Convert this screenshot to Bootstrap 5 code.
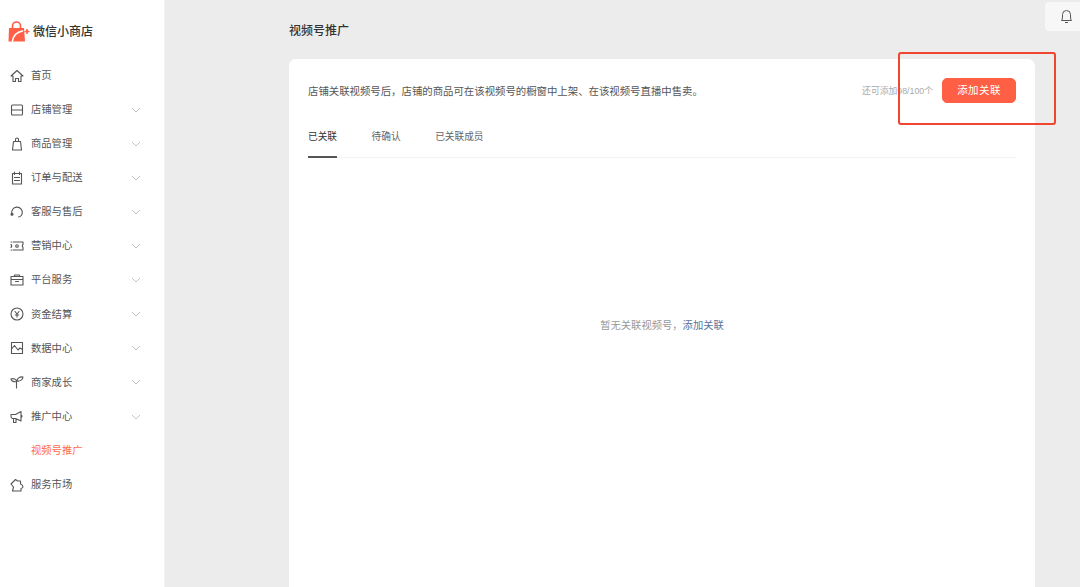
<!DOCTYPE html>
<html lang="zh">
<head>
<meta charset="utf-8">
<title>视频号推广</title>
<link href="https://cdn.jsdelivr.net/npm/bootstrap@5.3.0/dist/css/bootstrap.min.css" rel="stylesheet">
<style>
html,body{height:587px;overflow:hidden}
body{background:#ececec;font-family:"Liberation Sans","Noto Sans CJK SC",sans-serif;color:#333;position:relative}
.shell{height:587px}
.side{width:165px;background:#fff;flex:none;padding-top:20px;border-right:1px solid #f1f1f1}
.brand{height:24px;padding-left:8px;gap:3px;font-size:12px;color:#333;font-weight:500;margin-bottom:14.600px}
.mitem{height:34.100px;padding-left:10px;padding-right:23px;font-size:10.300px;color:#555;gap:7px}
.mitem svg.ic{width:14px;height:14px;flex:none;fill:none;stroke:#555;stroke-width:1.100;stroke-linecap:round;stroke-linejoin:round}
.mitem svg.chev{width:10px;height:6px;margin-left:auto;fill:none;stroke:#c4c4c4;stroke-width:1}
.mitem.sub{padding-left:31px;color:#ff6a50}
.work{flex:1;min-width:0;padding-left:124px;padding-right:45px}
.page-h{height:59px;padding-top:22px;font-size:12px;line-height:18px;color:#333;font-weight:500}
.panel{background:#fff;border-radius:7px 7px 0 0;height:528px;padding:19px 19px 0 19px}
.topline{height:25px}
.desc{font-size:10.400px;color:#555;margin-top:2px}
.quota{font-size:8.800px;color:#aaa;margin-right:9px;margin-top:2px}
.addbtn{--bs-btn-bg:#ff5f45;--bs-btn-border-color:#ff5f45;--bs-btn-color:#fff;--bs-btn-hover-bg:#ff5f45;--bs-btn-hover-border-color:#ff5f45;--bs-btn-hover-color:#fff;width:74px;height:25px;padding:0;font-size:10.500px;letter-spacing:.4px;line-height:23px;border-radius:5px}
.tabrow{margin-top:14px;height:41px;border-bottom:1px solid #f3f3f3;gap:34.500px;font-size:9.700px;color:#666}
.tabitem{height:41px;padding-top:13px;line-height:14px}
.tabitem.on{color:#333;border-bottom:2px solid #555}
.empty{height:336px;font-size:10.300px;color:#999}
.empty a{color:#56729c;text-decoration:none}
.bellbox{position:absolute;left:1045px;top:2px;width:35px;height:29px;background:#f7f7f7;border-radius:4px 0 0 4px;padding-left:8px}
.bellbox svg{width:13px;height:15px;fill:none;stroke:#555;stroke-width:1}
.markbox{position:absolute;left:898px;top:52px;width:158px;height:73px;border:2px solid #f0452f;border-radius:3px;pointer-events:none}
</style>
</head>
<body>
<div class="d-flex shell">
  <aside class="side">
    <div class="brand d-flex align-items-center">
      <svg width="22" height="22" viewBox="0 0 22 22"><path d="M4.500 7 V5 a4 4 0 0 1 8 0 V7" fill="none" stroke="#ff5f45" stroke-width="1.600"/><path d="M1 7 H16 L17 20.500 H0.500 Z" fill="#ff5f45"/><path d="M4.500 20 C5.500 14 9 11 14.500 10" fill="none" stroke="#fff" stroke-width="1.600" stroke-linecap="round"/><path d="M19 8 V13 M16.500 10.500 H21.500" stroke="#ff5f45" stroke-width="1.600"/></svg>
      <span>微信小商店</span>
    </div>
    <nav>
      <div class="mitem d-flex align-items-center"><svg class="ic" viewBox="0 0 14 14"><path d="M1 7 7 1.500 13 7 H11 V12.500 H8.500 V9.500 H5.500 V12.500 H3 V7 Z"/></svg><span>首页</span></div>
      <div class="mitem d-flex align-items-center"><svg class="ic" viewBox="0 0 14 14"><path d="M2.500 2 H11.500 Q12.500 2 12.500 3 V11 Q12.500 12 11.500 12 H2.500 Q1.500 12 1.500 11 V3 Q1.500 2 2.500 2 Z M1.500 7 H12.500"/></svg><span>店铺管理</span><svg class="chev" viewBox="0 0 10 6"><path d="M1 1 5 5 9 1"/></svg></div>
      <div class="mitem d-flex align-items-center"><svg class="ic" viewBox="0 0 14 14"><path d="M3.500 4.500 H10.500 L11.500 13 H2.500 Z M5.500 4.500 V2.500 a1.500 1.500 0 0 1 3 0 V4.500"/></svg><span>商品管理</span><svg class="chev" viewBox="0 0 10 6"><path d="M1 1 5 5 9 1"/></svg></div>
      <div class="mitem d-flex align-items-center"><svg class="ic" viewBox="0 0 14 14"><path d="M2.500 2.500 H11.500 V13 H2.500 Z M4.500 1 V3.500 M9.500 1 V3.500 M4.500 6.500 H9.500 M4.500 9.500 H9.500"/></svg><span>订单与配送</span><svg class="chev" viewBox="0 0 10 6"><path d="M1 1 5 5 9 1"/></svg></div>
      <div class="mitem d-flex align-items-center"><svg class="ic" viewBox="0 0 14 14"><path d="M2 9.200 A5.300 5.300 0 1 1 12.200 8.500 Q11.500 11.500 8.500 12"/><circle cx="2" cy="9.300" r="1" fill="#555"/></svg><span>客服与售后</span><svg class="chev" viewBox="0 0 10 6"><path d="M1 1 5 5 9 1"/></svg></div>
      <div class="mitem d-flex align-items-center"><svg class="ic" viewBox="0 0 14 14"><path d="M3 3 H13 V5.500 Q11.500 7 13 8.500 V11 H3 M1 3 H1.500 M1 5.500 Q2.500 7 1 8.500 M1 11 H1.500"/><circle cx="7" cy="7" r="1.300"/></svg><span>营销中心</span><svg class="chev" viewBox="0 0 10 6"><path d="M1 1 5 5 9 1"/></svg></div>
      <div class="mitem d-flex align-items-center"><svg class="ic" viewBox="0 0 14 14"><path d="M1 3.500 H13 V12 H1 Z M4.500 3.500 V2 H9.500 V3.500 M1 6.500 H13 M5.500 8.500 H8.500"/></svg><span>平台服务</span><svg class="chev" viewBox="0 0 10 6"><path d="M1 1 5 5 9 1"/></svg></div>
      <div class="mitem d-flex align-items-center"><svg class="ic" viewBox="0 0 14 14"><circle cx="7" cy="7" r="6"/><path d="M5 4.500 7 7 9 4.500 M7 7 V10 M5.300 8 H8.700"/></svg><span>资金结算</span><svg class="chev" viewBox="0 0 10 6"><path d="M1 1 5 5 9 1"/></svg></div>
      <div class="mitem d-flex align-items-center"><svg class="ic" viewBox="0 0 14 14"><path d="M1.500 1.500 H12.500 V12.500 H1.500 Z M1.500 8 4.500 4.500 8 9 10 7 12.500 8.500"/></svg><span>数据中心</span><svg class="chev" viewBox="0 0 10 6"><path d="M1 1 5 5 9 1"/></svg></div>
      <div class="mitem d-flex align-items-center"><svg class="ic" viewBox="0 0 14 14"><path d="M6.500 13 V6 M6.500 6.500 C4.500 7 1 6.500 1 4 C3.500 3 6.500 4 6.500 6.500 Z M7 6 C7 3.500 9.500 1.500 13 2 C13 4.500 10 6.500 7 6 Z"/></svg><span>商家成长</span><svg class="chev" viewBox="0 0 10 6"><path d="M1 1 5 5 9 1"/></svg></div>
      <div class="mitem d-flex align-items-center"><svg class="ic" viewBox="0 0 14 14"><path d="M1 4.500 H5.500 L11 1.500 V11 L5.500 8.500 H2.500 Q1 8 1 6.500 Z M3.500 8.500 V12.500 H6 V9 M11 5 Q13 6 11 7.500"/></svg><span>推广中心</span><svg class="chev" viewBox="0 0 10 6"><path d="M1 1 5 5 9 1"/></svg></div>
      <div class="mitem sub d-flex align-items-center"><span>视频号推广</span></div>
      <div class="mitem d-flex align-items-center"><svg class="ic" viewBox="0 0 14 14"><path d="M1 6 5.500 1.500 7.500 3 H10.500 V6 Q13 7 13 9 Q12 10.500 11 10.500 V13 H2.500 L3.500 9 Z"/></svg><span>服务市场</span></div>
    </nav>
  </aside>
  <main class="work">
    <div class="page-h">视频号推广</div>
    <section class="panel">
      <div class="topline d-flex align-items-center">
        <span class="desc">店铺关联视频号后，店铺的商品可在该视频号的橱窗中上架、在该视频号直播中售卖。</span>
        <span class="quota ms-auto">还可添加98/100个</span>
        <button type="button" class="btn addbtn">添加关联</button>
      </div>
      <div class="tabrow d-flex">
        <div class="tabitem on">已关联</div>
        <div class="tabitem">待确认</div>
        <div class="tabitem">已关联成员</div>
      </div>
      <div class="empty d-flex align-items-center justify-content-center"><span>暂无关联视频号，<a href="#">添加关联</a></span></div>
    </section>
  </main>
</div>
<div class="bellbox d-flex align-items-center justify-content-center"><svg viewBox="0 0 13 15"><path d="M1.500 11.500 Q2.500 10.500 2.500 8 V5.500 a4 4 0 0 1 8 0 V8 Q10.500 10.500 11.500 11.500 Z M5 13.500 H8"/></svg></div>
<div class="markbox"></div>
</body>
</html>
